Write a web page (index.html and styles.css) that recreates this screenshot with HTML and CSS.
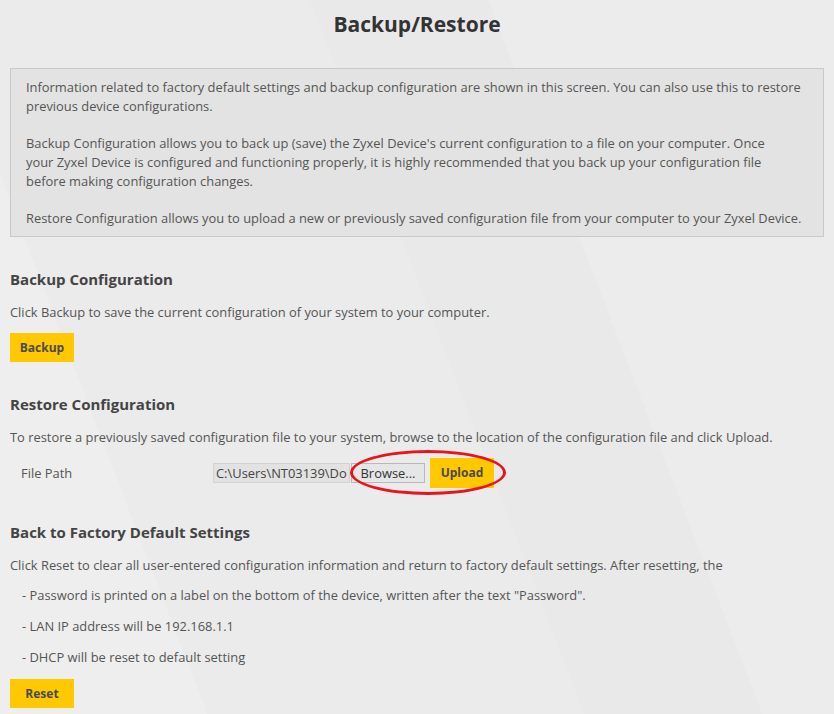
FILE: index.html
```html
<!DOCTYPE html>
<html lang="en">
<head>
    <meta charset="UTF-8">
    <meta name="viewport" content="width=device-width, initial-scale=1.0">
    <title>Backup/Restore</title>
    <link rel="stylesheet" href="styles.css">
</head>
<body>
    <div class="page">
        <h1 class="page-title">Backup/Restore</h1>

        <!-- Help text for the whole screen -->
        <div class="info-box">
            <p>Information related to factory default settings and backup configuration are shown in this screen. You can also use this to restore previous device configurations.</p>
            <p>Backup Configuration allows you to back up (save) the Zyxel Device's current configuration to a file on your computer. Once<br>your Zyxel Device is configured and functioning properly, it is highly recommended that you back up your configuration file<br>before making configuration changes.</p>
            <p>Restore Configuration allows you to upload a new or previously saved configuration file from your computer to your Zyxel Device.</p>
        </div>

        <div class="section">
            <h2>Backup Configuration</h2>
            <p>Click Backup to save the current configuration of your system to your computer.</p>
            <button class="btn-yellow" type="button">Backup</button>
        </div>

        <div class="section">
            <h2>Restore Configuration</h2>
            <p>To restore a previously saved configuration file to your system, browse to the location of the configuration file and click Upload.</p>
            <div class="file-row">
                <label class="file-label" for="file_path">File Path</label>
                <input class="file-path" id="file_path" type="text" value="C:\Users\NT03139\Documents\backup.rom" readonly>
                <div class="ring-wrap">
                    <button class="btn-browse" type="button">Browse...</button>
                    <button class="btn-yellow btn-upload" type="button">Upload</button>
                    <span class="ring"></span>
                </div>
            </div>
        </div>

        <div class="section">
            <h2>Back to Factory Default Settings</h2>
            <p>Click Reset to clear all user-entered configuration information and return to factory default settings. After resetting, the</p>
            <ul class="reset-notes">
                <li>- Password is printed on a label on the bottom of the device, written after the text "Password".</li>
                <li>- LAN IP address will be 192.168.1.1</li>
                <li>- DHCP will be reset to default setting</li>
            </ul>
            <button class="btn-yellow" type="button">Reset</button>
        </div>
    </div>
</body>
</html>
```

FILE: styles.css
```css
html, body {
    height: 100%;
}
body {
    margin: 0;
    font-family: "Open Sans", Arial, sans-serif;
    font-size: 12.9px;
    color: #555;
    background-color: #ebebeb;
    background-image: linear-gradient(69deg,
        #eeeeee 0%, #eeeeee 18.7%,
        #ebebeb 18.7%, #ebebeb 52.7%,
        #e9e9e9 52.7%, #e9e9e9 68.8%,
        #ececec 68.8%, #ececec 100%);
}
.page {
    padding: 0 10px;
}
.page-title {
    margin: 0;
    padding: 10px 0 0;
    height: 58px;
    text-align: center;
    font-size: 21px;
    font-weight: bold;
    color: #333;
}
.info-box {
    background: #e3e3e3;
    border: 1px solid #c9c9c9;
    padding: 9px 15px 8px 15px;
    line-height: 18.7px;
}
.info-box p {
    margin: 0 0 18.7px;
}
.info-box p:last-child {
    margin-bottom: 0;
}
.section {
    margin-top: 32px;
}
.section h2 {
    margin: 0 0 14px;
    font-size: 15px;
    font-weight: bold;
    color: #444;
}
.section p {
    margin: 0 0 12px;
}
.btn-yellow {
    background: #ffc800;
    border: none;
    padding: 0;
    width: 64px;
    height: 29px;
    font-family: inherit;
    font-size: 12px;
    font-weight: bold;
    color: #4a4a4a;
    cursor: pointer;
}
.file-row {
    display: flex;
    align-items: center;
    padding: 0 0 2px 11px;
    margin-top: 9px;
}
.file-label {
    width: 192px;
}
.file-path {
    width: 137px;
    height: 20px;
    box-sizing: border-box;
    margin: 0;
    padding: 0 2px;
    border: 1px solid #d2d2d2;
    background: #e2e2e2;
    font-family: inherit;
    font-size: 12.9px;
    color: #444;
}
.ring-wrap {
    position: relative;
    display: flex;
    align-items: center;
}
.btn-browse {
    width: 74px;
    height: 20px;
    margin-left: 1px;
    padding: 0;
    border: 1px solid #b9b9b9;
    background: #e6e6e6;
    font-family: inherit;
    font-size: 12.9px;
    color: #333;
}
.btn-upload {
    height: 30px;
    margin-left: 5px;
}
/* red marker drawn around the upload controls */
.ring {
    position: absolute;
    left: 0;
    top: -8px;
    width: 150px;
    height: 39px;
    border: 3px solid #e8141c;
    border-radius: 50%;
    pointer-events: none;
}
.reset-notes {
    list-style: none;
    margin: 0;
    padding: 0 0 0 12px;
}
.reset-notes li {
    margin-bottom: 12px;
    line-height: 19px;
}
```
